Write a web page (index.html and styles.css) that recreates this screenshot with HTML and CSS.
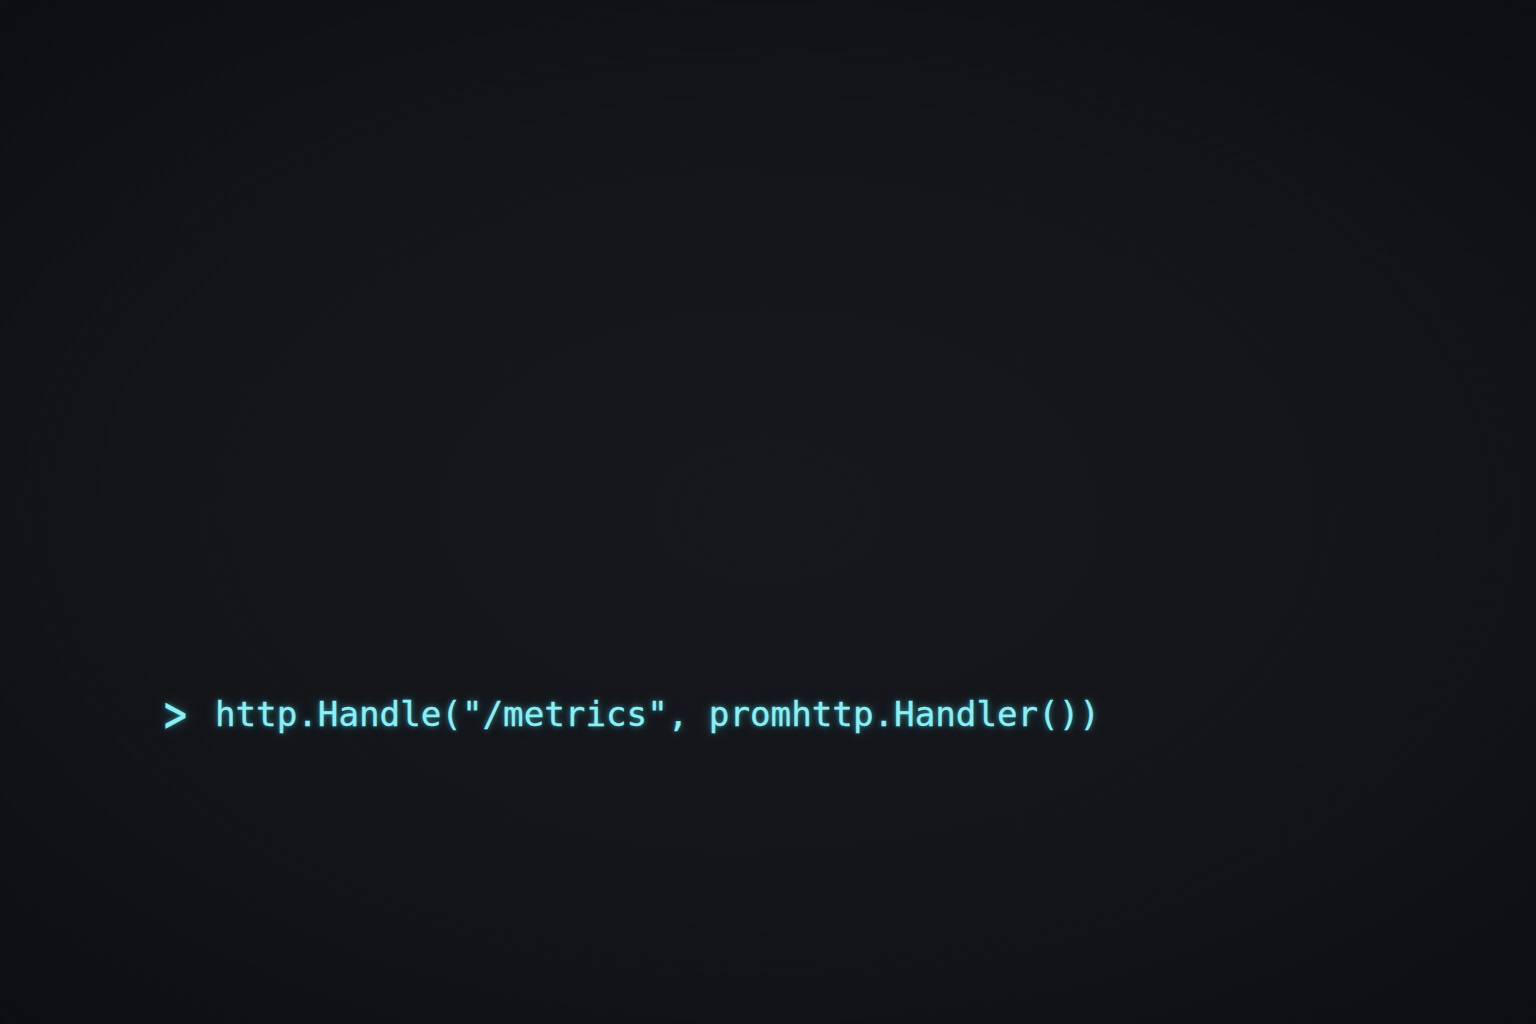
FILE: index.html
```html
<!DOCTYPE html>
<html>
<head>
<meta charset="utf-8">
<link rel="stylesheet" href="styles.css">
</head>
<body>
<main class="screen">
  <div class="line">
    <span class="prompt">&gt;</span>
    <code class="cmd">http.Handle("/metrics", promhttp.Handler())</code>
  </div>
</main>
</body>
</html>
```

FILE: styles.css
```css
html, body {
  margin: 0;
  padding: 0;
  height: 100%;
}
body {
  background: #101115;
}
.screen {
  width: 1536px;
  height: 1024px;
  box-sizing: border-box;
  background: radial-gradient(ellipse 75% 70% at 50% 50%, #17181d 0%, #141519 55%, #0d0e12 100%);
  padding: 692px 0 0 164px;
}
.line {
  display: flex;
  align-items: center;
  gap: 28px;
  font-family: "DejaVu Sans Mono", monospace;
  font-size: 34.2px;
  line-height: 44px;
  color: #8af0f6;
  text-shadow: 0 0 5px rgba(80, 220, 235, 0.6), 0 0 14px rgba(60, 200, 220, 0.35);
}
.prompt {
  display: inline-block;
  font-family: inherit;
  font-size: 38px;
  line-height: 44px;
  transform: scaleY(1.35);
  -webkit-text-stroke: 0.3px #8af0f6;
}
.cmd {
  font-family: inherit;
  font-size: inherit;
  -webkit-text-stroke: 0.3px #8af0f6;
}
```
